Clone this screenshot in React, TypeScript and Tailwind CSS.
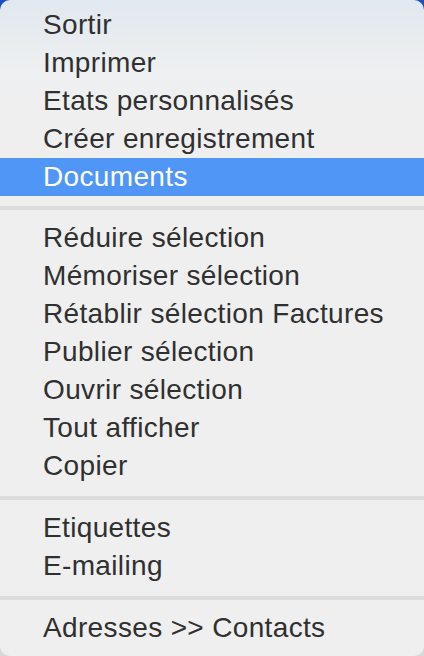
type Item = { label: string; active?: boolean } | "sep";

const items: Item[] = [
  { label: "Sortir" },
  { label: "Imprimer" },
  { label: "Etats personnalisés" },
  { label: "Créer enregistrement" },
  { label: "Documents", active: true },
  "sep",
  { label: "Réduire sélection" },
  { label: "Mémoriser sélection" },
  { label: "Rétablir sélection Factures" },
  { label: "Publier sélection" },
  { label: "Ouvrir sélection" },
  { label: "Tout afficher" },
  { label: "Copier" },
  "sep",
  { label: "Etiquettes" },
  { label: "E-mailing" },
  "sep",
  { label: "Adresses >> Contacts" },
];

export default function App() {
  return (
    <div className="w-[424px] h-[656px] bg-[linear-gradient(to_bottom,#1c4fc6_50%,#d8d8d8_50%)]">
      <div
        className="h-full rounded-[10px] bg-[linear-gradient(to_bottom,#e1e8ef_0px,#eef0f1_70px,#efefef_110px)] pt-[6px] text-[28px] tracking-[0.35px] text-[#303030]"
        style={{ fontFamily: '"Liberation Sans", Arial, sans-serif' }}
      >
        {items.map((it, i) =>
          it === "sep" ? (
            <div key={i} className={i === 5 ? "pt-[10px] pb-[9px]" : "pt-[11px] pb-[9px]"}>
              <div className="h-[4px] bg-[#dcdcdc]" />
            </div>
          ) : (
            <div
              key={i}
              className={`h-[38px] flex items-center pl-[43px] leading-none ${
                it.active ? "bg-[#5096f7] text-white" : ""
              }`}
            >
              {it.label}
            </div>
          )
        )}
      </div>
    </div>
  );
}
